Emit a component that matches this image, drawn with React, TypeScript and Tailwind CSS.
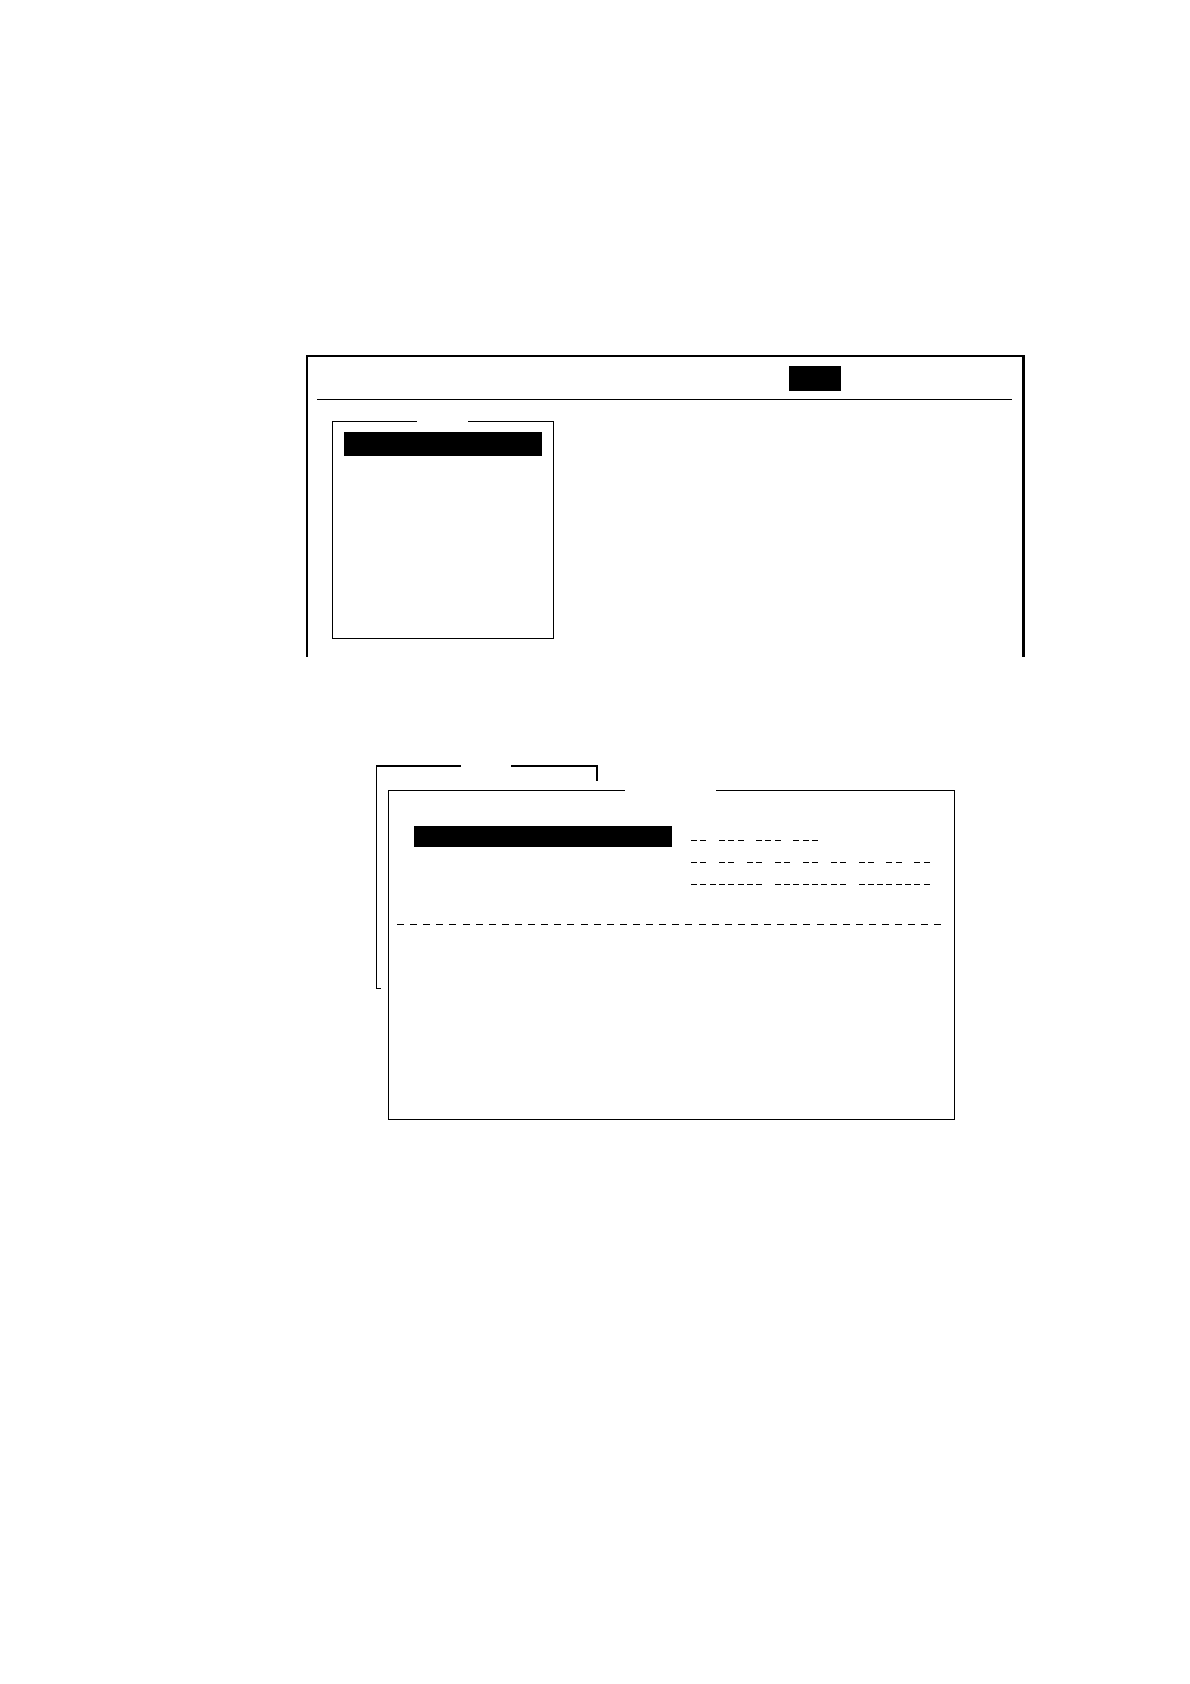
const dateRows = [
  "-- --- --- ---",
  "-- -- -- -- -- -- -- -- --",
  "-------- -------- --------",
];

// top edge of a window, open in the middle for its title
const TopEdge = ({ line, left, gap }: { line: string; left: string; gap: string }) => {
  return (
    <div className="flex">
      <div className={`bg-black ${line} ${left}`}></div>
      <div className={gap}></div>
      <div className={`flex-1 bg-black ${line}`}></div>
    </div>
  );
};

const DashRow = ({ pattern }: { pattern: string }) => {
  return (
    <div className="grid grid-cols-[repeat(26,minmax(0,1fr))]">
      {pattern.split("").map((c, i) => (
        <span key={i} className={c === "-" ? "block h-px w-[6px] max-w-full bg-black" : "block h-px"}></span>
      ))}
    </div>
  );
};

const MainScreen = () => {
  return (
    <section className="ml-[306px] mr-[165px] border-t-2 border-l-2 border-r-3 border-black pb-[18px]">
      <header className="ml-[9px] mr-[10px] flex justify-end border-b border-black pt-[9px] pb-2">
        <div className="mr-[171px] h-[25px] w-[52px] bg-black"></div>
      </header>
      <nav className="ml-6 mt-[21px] w-[222px]">
        <TopEdge line="h-px" left="w-[85px]" gap="w-[51px]" />
        <div className="h-[217px] border-x border-b border-black px-[11px] pt-[10px]">
          <div className="h-6 bg-black"></div>
        </div>
      </nav>
    </section>
  );
};

const MenuBehind = () => {
  return (
    <div className="col-start-1 row-start-1 w-[222px]">
      <TopEdge line="h-[2px]" left="w-[85px]" gap="w-[50px]" />
      <div className="flex items-start justify-between">
        <div className="h-[222px] w-[5px] border-l border-b border-black"></div>
        <div className="h-[14px] w-[2px] bg-black"></div>
      </div>
    </div>
  );
};

const DetailWindow = () => {
  return (
    <div className="col-start-1 row-start-1 ml-3 mt-[25px]">
      <TopEdge line="h-px" left="w-[237px]" gap="w-[91px]" />
      <div className="border-x border-b border-black bg-white pt-[35px] pb-[194px]">
        <div className="flex items-start gap-[19px] pl-[25px]">
          <div className="h-[21px] w-[258px] bg-black"></div>
          <div className="flex w-[242px] flex-col gap-[21px] pt-[14px]">
            {dateRows.map((row) => (
              <DashRow key={row} pattern={row} />
            ))}
          </div>
        </div>
        <div className="mt-[39px] flex justify-between pl-2 pr-3">
          {Array.from({ length: 42 }, (_, i) => (
            <span key={i} className="h-px w-[7px] bg-black"></span>
          ))}
        </div>
      </div>
    </div>
  );
};

export default function App() {
  return (
    <main className="min-h-screen bg-white pt-[355px] font-['Liberation_Sans',sans-serif]">
      <MainScreen />
      <section className="ml-[376px] mr-[235px] mt-[108px] grid">
        <MenuBehind />
        <DetailWindow />
      </section>
    </main>
  );
}
